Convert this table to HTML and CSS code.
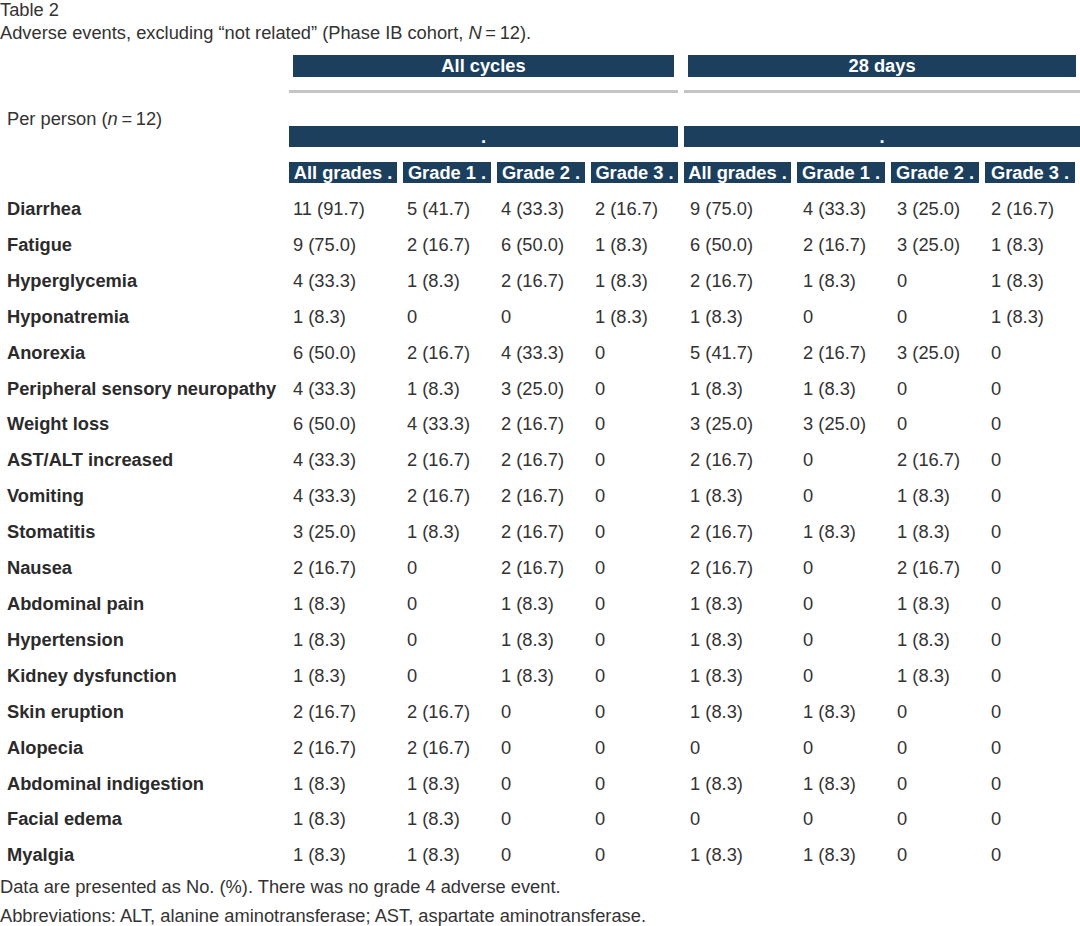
FILE: index.html
```html
<!DOCTYPE html>
<html lang="en">
<head>
    <meta charset="UTF-8">
    <meta name="viewport" content="width=device-width, initial-scale=1.0">
    <title>Table 2</title>
    <link rel="stylesheet" href="styles.css">
</head>
<body>
    <div class="caption">
        <div>Table 2</div>
        <div>Adverse events, excluding “not related” (Phase IB cohort, <i>N</i>&#8201;=&#8201;12).</div>
    </div>

    <div class="table-wrap">
        <table class="ae-table">
            <colgroup>
                <col class="c-label">
                <col class="c-wide"><col class="c-mid"><col class="c-mid"><col class="c-narrow">
                <col class="c-wide2"><col class="c-mid"><col class="c-mid"><col class="c-last">
            </colgroup>
            <thead>
                <tr class="row-group">
                    <th></th>
                    <th colspan="4"><div class="bar">All cycles</div></th>
                    <th colspan="4"><div class="bar">28 days</div></th>
                </tr>
                <tr class="row-rule">
                    <th rowspan="2" class="per-person">Per person (<i>n</i>&#8201;=&#8201;12)</th>
                    <th colspan="4" class="rule"></th>
                    <th colspan="4" class="rule"></th>
                </tr>
                <tr class="row-dot">
                    <th colspan="4"><div class="dot-bar">.</div></th>
                    <th colspan="4"><div class="dot-bar">.</div></th>
                </tr>
                <tr class="row-grades">
                    <th></th>
                    <th><span>All grades .</span></th>
                    <th><span>Grade 1 .</span></th>
                    <th><span>Grade 2 .</span></th>
                    <th><span>Grade 3 .</span></th>
                    <th><span>All grades .</span></th>
                    <th><span>Grade 1 .</span></th>
                    <th><span>Grade 2 .</span></th>
                    <th class="last"><span>Grade 3 .</span></th>
                </tr>
            </thead>
            <tbody>
                <tr><th>Diarrhea</th><td>11 (91.7)</td><td>5 (41.7)</td><td>4 (33.3)</td><td>2 (16.7)</td><td>9 (75.0)</td><td>4 (33.3)</td><td>3 (25.0)</td><td>2 (16.7)</td></tr>
                <tr><th>Fatigue</th><td>9 (75.0)</td><td>2 (16.7)</td><td>6 (50.0)</td><td>1 (8.3)</td><td>6 (50.0)</td><td>2 (16.7)</td><td>3 (25.0)</td><td>1 (8.3)</td></tr>
                <tr><th>Hyperglycemia</th><td>4 (33.3)</td><td>1 (8.3)</td><td>2 (16.7)</td><td>1 (8.3)</td><td>2 (16.7)</td><td>1 (8.3)</td><td>0</td><td>1 (8.3)</td></tr>
                <tr><th>Hyponatremia</th><td>1 (8.3)</td><td>0</td><td>0</td><td>1 (8.3)</td><td>1 (8.3)</td><td>0</td><td>0</td><td>1 (8.3)</td></tr>
                <tr><th>Anorexia</th><td>6 (50.0)</td><td>2 (16.7)</td><td>4 (33.3)</td><td>0</td><td>5 (41.7)</td><td>2 (16.7)</td><td>3 (25.0)</td><td>0</td></tr>
                <tr><th>Peripheral sensory neuropathy</th><td>4 (33.3)</td><td>1 (8.3)</td><td>3 (25.0)</td><td>0</td><td>1 (8.3)</td><td>1 (8.3)</td><td>0</td><td>0</td></tr>
                <tr><th>Weight loss</th><td>6 (50.0)</td><td>4 (33.3)</td><td>2 (16.7)</td><td>0</td><td>3 (25.0)</td><td>3 (25.0)</td><td>0</td><td>0</td></tr>
                <tr><th>AST/ALT increased</th><td>4 (33.3)</td><td>2 (16.7)</td><td>2 (16.7)</td><td>0</td><td>2 (16.7)</td><td>0</td><td>2 (16.7)</td><td>0</td></tr>
                <tr><th>Vomiting</th><td>4 (33.3)</td><td>2 (16.7)</td><td>2 (16.7)</td><td>0</td><td>1 (8.3)</td><td>0</td><td>1 (8.3)</td><td>0</td></tr>
                <tr><th>Stomatitis</th><td>3 (25.0)</td><td>1 (8.3)</td><td>2 (16.7)</td><td>0</td><td>2 (16.7)</td><td>1 (8.3)</td><td>1 (8.3)</td><td>0</td></tr>
                <tr><th>Nausea</th><td>2 (16.7)</td><td>0</td><td>2 (16.7)</td><td>0</td><td>2 (16.7)</td><td>0</td><td>2 (16.7)</td><td>0</td></tr>
                <tr><th>Abdominal pain</th><td>1 (8.3)</td><td>0</td><td>1 (8.3)</td><td>0</td><td>1 (8.3)</td><td>0</td><td>1 (8.3)</td><td>0</td></tr>
                <tr><th>Hypertension</th><td>1 (8.3)</td><td>0</td><td>1 (8.3)</td><td>0</td><td>1 (8.3)</td><td>0</td><td>1 (8.3)</td><td>0</td></tr>
                <tr><th>Kidney dysfunction</th><td>1 (8.3)</td><td>0</td><td>1 (8.3)</td><td>0</td><td>1 (8.3)</td><td>0</td><td>1 (8.3)</td><td>0</td></tr>
                <tr><th>Skin eruption</th><td>2 (16.7)</td><td>2 (16.7)</td><td>0</td><td>0</td><td>1 (8.3)</td><td>1 (8.3)</td><td>0</td><td>0</td></tr>
                <tr><th>Alopecia</th><td>2 (16.7)</td><td>2 (16.7)</td><td>0</td><td>0</td><td>0</td><td>0</td><td>0</td><td>0</td></tr>
                <tr><th>Abdominal indigestion</th><td>1 (8.3)</td><td>1 (8.3)</td><td>0</td><td>0</td><td>1 (8.3)</td><td>1 (8.3)</td><td>0</td><td>0</td></tr>
                <tr><th>Facial edema</th><td>1 (8.3)</td><td>1 (8.3)</td><td>0</td><td>0</td><td>0</td><td>0</td><td>0</td><td>0</td></tr>
                <tr><th>Myalgia</th><td>1 (8.3)</td><td>1 (8.3)</td><td>0</td><td>0</td><td>1 (8.3)</td><td>1 (8.3)</td><td>0</td><td>0</td></tr>
            </tbody>
        </table>
    </div>

    <div class="notes">
        <p>Data are presented as No. (%). There was no grade 4 adverse event.</p>
        <p>Abbreviations: ALT, alanine aminotransferase; AST, aspartate aminotransferase.</p>
    </div>
</body>
</html>
```

FILE: styles.css
```css
html {
    overflow-x: hidden;
}
body {
    font-family: "Liberation Sans", Arial, sans-serif;
    font-size: 18.3px;
    line-height: 22px;
    color: #333;
    background-color: #fff;
    margin: 0;
}
.caption {
    margin-top: -1px;
}
.caption div + div {
    margin-top: 1px;
}
.table-wrap {
    overflow: hidden;
    margin-top: 11px;
}
.ae-table {
    table-layout: fixed;
    width: 1092px;
    margin-left: -6px;
    border-collapse: separate;
    border-spacing: 6px 0;
}
.c-label { width: 283px; }
.c-wide { width: 108px; }
.c-wide2 { width: 107px; }
.c-mid { width: 88px; }
.c-narrow { width: 87px; }
.c-last { width: 95px; }

.ae-table th,
.ae-table td {
    padding: 0;
    text-align: left;
    white-space: nowrap;
}

/* header rows */
.row-group th {
    padding-bottom: 13px;
}
.bar {
    margin: 0 4px;
    height: 22px;
    line-height: 22px;
    background-color: #1c3f5e;
    color: #fff;
    font-weight: bold;
    text-align: center;
}
.row-rule th {
    height: 33px;
}
.row-rule .rule {
    border-top: 3px solid #c4c4c4;
    vertical-align: top;
}
.per-person {
    font-weight: normal;
    padding-left: 7px !important;
    vertical-align: middle;
}
.dot-bar {
    height: 21px;
    line-height: 21px;
    background-color: #1c3f5e;
    color: #fff;
    font-weight: bold;
    text-align: center;
}
.row-grades th {
    padding: 15px 0 8px;
}
.row-grades span {
    display: block;
    height: 21px;
    line-height: 21px;
    background-color: #1c3f5e;
    color: #fff;
    font-weight: bold;
    text-align: center;
}
.row-grades th.last span {
    margin-right: 5px;
}

/* body rows */
.ae-table tbody th,
.ae-table tbody td {
    padding: 7px 0 7px 4px;
    line-height: 21.9px;
    vertical-align: middle;
}
.ae-table tbody td:nth-child(n+6) {
    padding-left: 6px;
}
.ae-table tbody th {
    padding-left: 7px;
    font-weight: bold;
    color: #2b2b2b;
}

.notes {
    margin-top: 3px;
}
.notes p {
    margin: 0;
}
.notes p + p {
    margin-top: 7px;
}
```
